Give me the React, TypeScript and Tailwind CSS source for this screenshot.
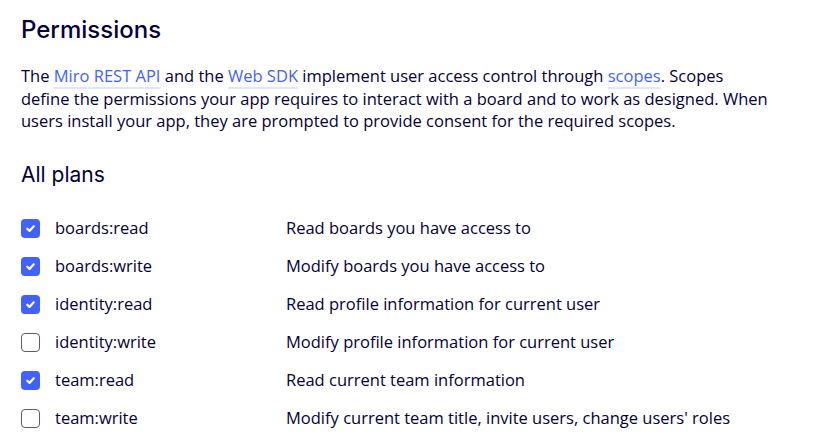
const SCOPES = [
  { name: 'boards:read', desc: 'Read boards you have access to', checked: true },
  { name: 'boards:write', desc: 'Modify boards you have access to', checked: true },
  { name: 'identity:read', desc: 'Read profile information for current user', checked: true },
  { name: 'identity:write', desc: 'Modify profile information for current user', checked: false },
  { name: 'team:read', desc: 'Read current team information', checked: true },
  { name: 'team:write', desc: "Modify current team title, invite users, change users' roles", checked: false },
];

function Link({ children }: { children: React.ReactNode }) {
  return (
    <a className="text-[#4262ff] underline decoration-2 decoration-[#dfe4ff] underline-offset-[5px]">{children}</a>
  );
}

function Checkbox({ checked }: { checked: boolean }) {
  if (!checked) {
    return <span className="block w-[19px] h-[19px] rounded-[4px] border-[1.5px] border-[#5c5a7a] bg-white" />;
  }
  return (
    <span className="flex w-[19px] h-[19px] rounded-[4px] bg-[#4262ff] items-center justify-center">
      <svg className="w-[11px] h-[11px]" viewBox="0 0 12 12" fill="none" stroke="white" strokeWidth="2.4" strokeLinecap="round" strokeLinejoin="round">
        <path d="M2.5 6.3l2.4 2.3 4.6-5" />
      </svg>
    </span>
  );
}

export default function App() {
  return (
    <div className="w-[827px] h-[439px] bg-white px-[21px] pt-[14px] text-[#050038] font-['Open_Sans',sans-serif]">
      <h1 className="text-[24px] leading-[32px] font-medium font-['Inter',sans-serif]">Permissions</h1>

      <p className="mt-[19px] w-[750px] text-[16.5px] leading-[22.5px]">
        The <Link>Miro REST API</Link> and the <Link>Web SDK</Link> implement user access control through{' '}
        <Link>scopes</Link>. Scopes define the permissions your app requires to interact with a board and to work as
        designed. When users install your app, they are prompted to provide consent for the required scopes.
      </p>

      <h2 className="mt-[28px] text-[21px] leading-[28px] font-normal font-['Inter',sans-serif]">All plans</h2>

      <div className="mt-[21px] flex flex-col">
        {SCOPES.map(s => (
          <div key={s.name} className="flex items-center h-[38px]">
            <Checkbox checked={s.checked} />
            <span className="ml-[15px] w-[231px] text-[16.5px]">{s.name}</span>
            <span className="text-[16.5px]">{s.desc}</span>
          </div>
        ))}
      </div>
    </div>
  );
}
